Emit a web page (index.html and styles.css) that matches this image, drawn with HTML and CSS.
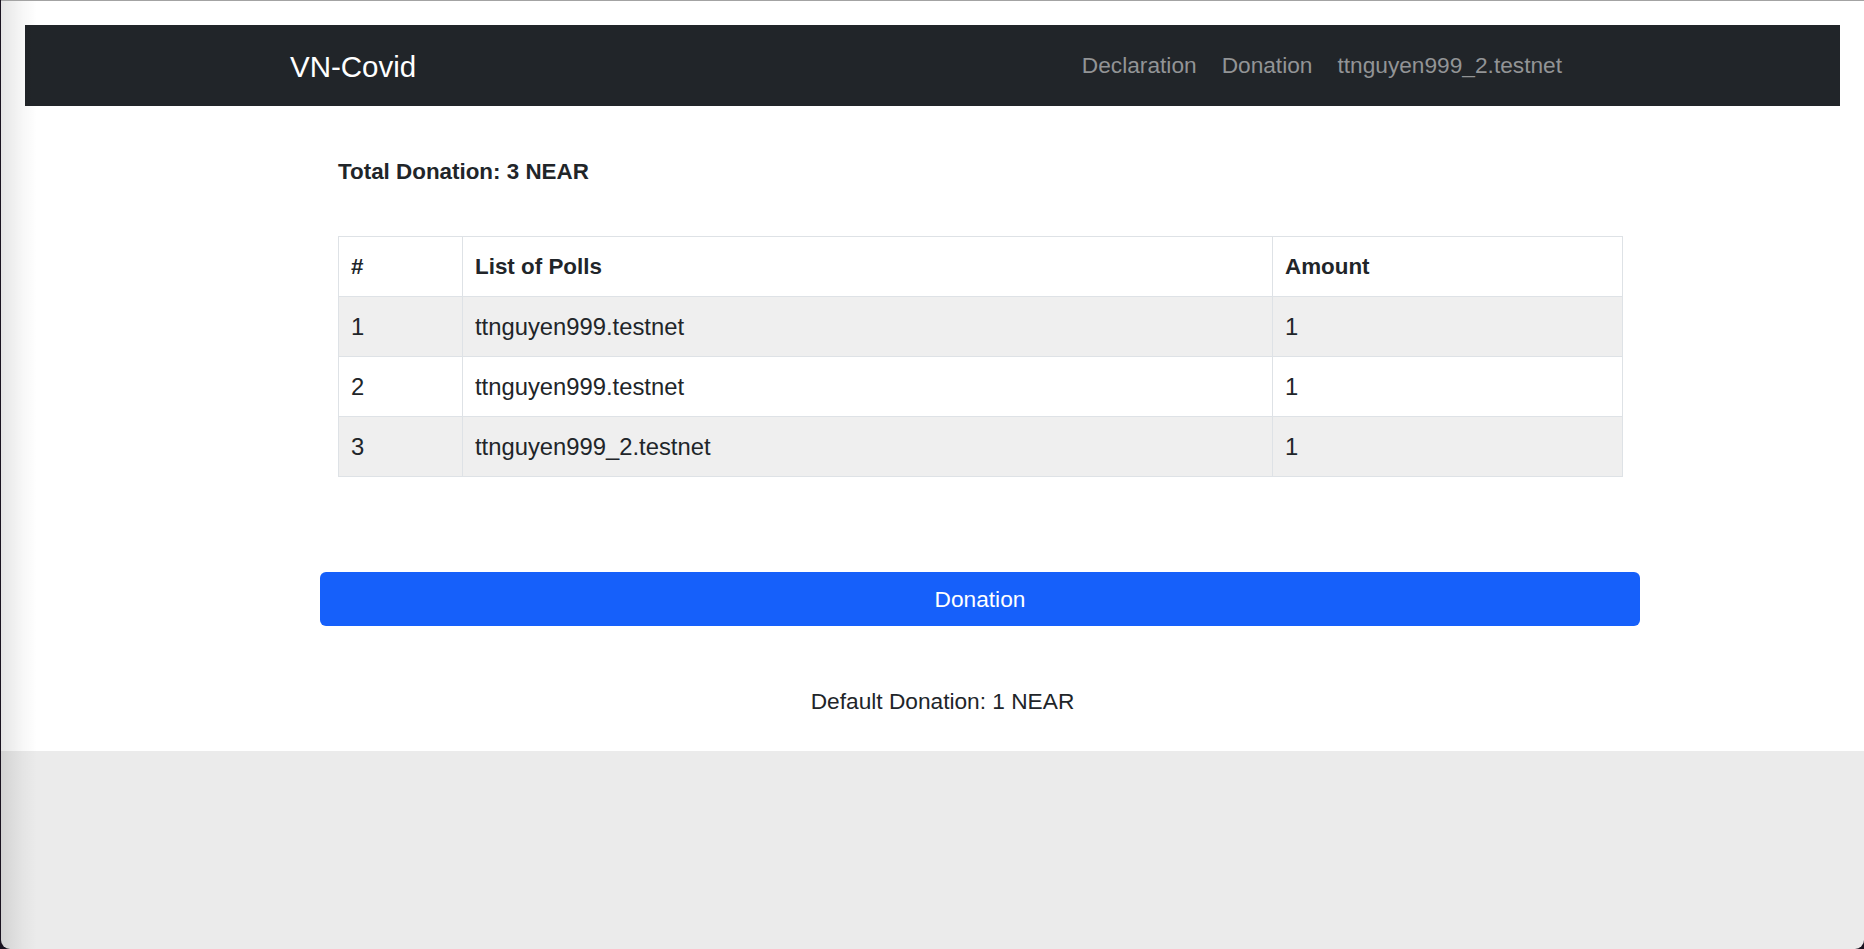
FILE: index.html
```html
<!DOCTYPE html>
<html lang="en">
<head>
<meta charset="utf-8">
<title>VN-Covid</title>
<link rel="stylesheet" href="styles.css">
</head>
<body>
<div class="window">
  <div class="page">
    <nav class="navbar">
      <div class="nav-inner">
        <a class="brand" href="#">VN-Covid</a>
        <ul class="nav-links">
          <li><a href="#">Declaration</a></li>
          <li><a href="#">Donation</a></li>
          <li><a href="#">ttnguyen999_2.testnet</a></li>
        </ul>
      </div>
    </nav>
    <main class="main">
      <div class="summary">
        <p class="total">Total Donation: 3 NEAR</p>
        <table class="polls">
          <colgroup>
            <col class="c-num">
            <col class="c-name">
            <col class="c-amt">
          </colgroup>
          <thead>
            <tr><th>#</th><th>List of Polls</th><th>Amount</th></tr>
          </thead>
          <tbody>
            <tr class="odd"><td>1</td><td>ttnguyen999.testnet</td><td>1</td></tr>
            <tr><td>2</td><td>ttnguyen999.testnet</td><td>1</td></tr>
            <tr class="odd"><td>3</td><td>ttnguyen999_2.testnet</td><td>1</td></tr>
          </tbody>
        </table>
      </div>
      <button class="donate" type="button">Donation</button>
      <p class="default">Default Donation: 1 NEAR</p>
    </main>
  </div>
  <div class="shadow"></div>
</div>
</body>
</html>
```
FILE: styles.css
```css
html, body {
  margin: 0;
  padding: 0;
  background: #1a1320;
}
body {
  font-family: "Liberation Sans", Arial, sans-serif;
  color: #212529;
  font-size: 23px;
}
.window {
  position: relative;
  height: 948px;
  margin-left: 1px;
  border-top: 1px solid #a3a3a3;
  background: #ebebeb;
  border-radius: 0 0 9px 9px;
  overflow: hidden;
}
.shadow {
  position: absolute;
  left: 0;
  top: 0;
  width: 36px;
  height: 100%;
  background: linear-gradient(to right, rgba(0,0,0,0.10), rgba(0,0,0,0.03) 60%, rgba(0,0,0,0));
  pointer-events: none;
}
.page {
  background: #fff;
  padding: 24px 24px 36px;
}
.navbar {
  background: #212529;
  height: 81px;
  display: flex;
  align-items: center;
}
.nav-inner {
  width: 1284px;
  margin-left: 265px;
  display: flex;
  align-items: center;
  justify-content: space-between;
}
.brand {
  color: #fff;
  text-decoration: none;
  font-size: 29.5px;
  line-height: 1;
  padding-top: 3px;
}
.nav-links {
  list-style: none;
  margin: 0 12px 0 0;
  padding: 0;
  display: flex;
  gap: 25px;
}
.nav-links a {
  color: #929496;
  text-decoration: none;
  font-size: 22.7px;
}
.main {
  display: flex;
  flex-direction: column;
  align-items: flex-start;
}
.summary {
  margin-left: 313px;
  width: 1284px;
}
.total {
  margin: 52px 0 0;
  font-weight: bold;
  font-size: 22.4px;
  line-height: 28px;
}
.polls {
  margin-top: 50px;
  width: 1284px;
  border-collapse: collapse;
  table-layout: fixed;
  font-size: 23.8px;
}
.c-num { width: 124px; }
.c-name { width: 810px; }
.c-amt { width: 350px; }
.polls th, .polls td {
  border: 1px solid #dee2e6;
  height: 60px;
  padding: 0 12px;
  text-align: left;
  vertical-align: middle;
  box-sizing: border-box;
}
.polls th {
  font-weight: bold;
  font-size: 22.4px;
}
.polls tr.odd td {
  background: #efefef;
}
.donate {
  margin: 95px 0 0 295px;
  width: 1320px;
  height: 54px;
  border: none;
  border-radius: 6px;
  background: #1660fa;
  color: #fff;
  font-family: "Liberation Sans", Arial, sans-serif;
  font-size: 22.7px;
  padding: 0;
}
.default {
  margin: 61px 0 0;
  align-self: stretch;
  text-align: center;
  padding-left: 20px;
  line-height: 28px;
  font-size: 22.7px;
}
```
